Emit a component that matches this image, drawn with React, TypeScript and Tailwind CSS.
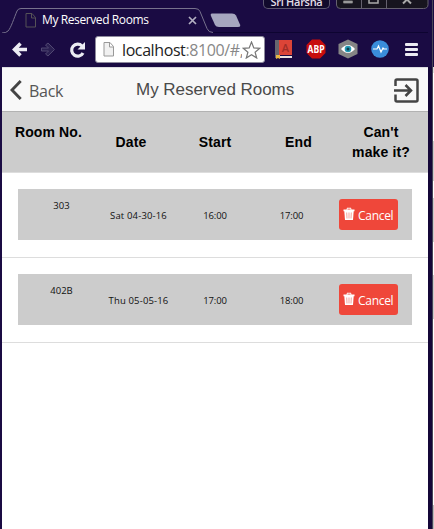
import React from 'react';

const ui = "font-['Open_Sans','Noto_Sans',sans-serif]";
const arial = "font-['Liberation_Sans',Arial,sans-serif]";

function PageIcon({ light = false }: { light?: boolean }) {
  return (
    <svg width="12" height="15" viewBox="0 0 12 15" className="shrink-0">
      <path
        d="M1 .5h6L10.5 4.500v9.500H1zM6.500 .5v4.500h4"
        fill={light ? '#f1f1f1' : 'none'}
        stroke={light ? '#999' : '#555257'}
      />
    </svg>
  );
}

function TabStrip() {
  return (
    <div className="relative flex h-[33px] shrink-0">
      <svg className="absolute inset-0" width="434" height="33" viewBox="0 0 434 33" fill="none">
        <path
          d="M2 35v-2q4 0 6-2c3-3 6-13 9-20q1-2.500 4-2.500h174q4 0 5 3l7 17q1.500 4 6 4"
          stroke="#77728d"
        />
        <path d="M213 32.500h215" stroke="#0d0431" />
        <path
          d="M212 13.500h20q3 0 4 2l4 9q1 2.500-2 2.500h-19q-3 0-4-2l-4-9q-1-2.500 1-2.500z"
          fill="#a6a6bf"
        />
        <path d="M432.500 0v33" stroke="#494657" />
      </svg>
      <div className="flex w-[200px] items-center pt-[7px] pl-[25px]">
        <PageIcon />
        <span className={`${ui} ml-[5px] w-[140px] text-[12px] leading-4 font-medium tracking-[-0.4px] whitespace-nowrap text-white`}>
          My Reserved Rooms
        </span>
        <svg className="ml-[6px] shrink-0" width="9" height="9" viewBox="0 0 9 9" stroke="#b3b0c2" strokeWidth="1.700">
          <path d="M1 1l7 7M8 1L1 8" />
        </svg>
      </div>
      <div className="relative ml-[63px] flex h-[9px] w-[67px] items-end justify-center overflow-hidden rounded-b-[5px] border-x border-b border-[#5d5870] bg-[#110a2c]">
        <span className={`${ui} -mb-px text-[11px] leading-[14px] font-semibold tracking-[-0.3px] whitespace-nowrap text-[#e1dfe7]`}>
          Sri Harsha
        </span>
      </div>
      <svg className="relative ml-[6px]" width="93" height="10" viewBox="0 0 93 10" fill="none">
        <path d="M.5 0v5q0 3.500 4 3.500h83q4.500 0 4.500-4V0" fill="#17151f" stroke="#65616f" />
        <path d="M25.500 0v8M50.500 0v8" stroke="#65616f" />
        <path d="M7.500 1h9v2h-9z" fill="#bcbcbf" stroke="#777" />
        <path d="M33 0v3h9V0" stroke="#aaa" strokeWidth="1.500" />
        <path d="M67 3.500l4-4 4 4" stroke="#aaa" strokeWidth="2" />
      </svg>
    </div>
  );
}

function Toolbar() {
  return (
    <div className="relative flex h-[34px] shrink-0 items-center pb-[2px]">
      <svg width="94" height="32" viewBox="0 0 94 32" fill="none" className="shrink-0">
        <path d="M27 16.500H14.500M20.500 10.500l-6 6 6 6" stroke="#ececf3" strokeWidth="3.500" />
        <path
          d="M41.500 15h7l-3-3 2.500-2 6.500 6.500-6.500 6.500-2.500-2 3-3h-7z"
          fill="#2b2052"
          stroke="#514872"
        />
        <path d="M83 20a6 6 0 1 1-1-7" stroke="#ececf3" strokeWidth="3.200" />
        <path d="M85 9v7.500h-7.500z" fill="#ececf3" />
      </svg>
      <div className="mt-[1px] ml-[1px] flex h-[27px] w-[170px] shrink-0 items-center overflow-hidden rounded-[3px] border border-[#8e8b9d] bg-white pl-[7px]">
        <PageIcon light />
        <span className={`${ui} ml-[7px] w-[120px] overflow-hidden text-[16px] leading-6 tracking-[-0.4px] whitespace-nowrap text-[#888]`}>
          <span className="text-[#222]">localhost</span>:8100/#,
        </span>
        <svg width="19" height="18" viewBox="0 0 19 18" className="shrink-0">
          <path
            d="M9.500 1l2.300 5.900 6 .4-4.700 3.900 1.600 5.800-5.200-3.300L4.300 17l1.600-5.800L1.200 7.300l6-.4z"
            fill="#fff"
            stroke="#777"
            strokeWidth="1.200"
          />
        </svg>
      </div>
      <svg className="mt-[2px] ml-[9px]" width="18" height="24" viewBox="0 0 18 24">
        <path d="M1 2h4v18H1z" fill="#68656e" />
        <path d="M5 2h13v15H5z" fill="#dc4437" />
        <path d="M5 18h13v2H3z" fill="#eee4df" />
        <path d="M2 17h4v4l-2-1-2 1z" fill="#e9b744" />
        <text x="11.500" y="14" textAnchor="middle" fontSize="11" fontWeight="600" fontFamily="Open Sans" fill="#9f2d27">
          A
        </text>
      </svg>
      <svg className="ml-[14px]" width="20" height="20" viewBox="0 0 20 20">
        <path d="M6 .5h8L19.500 6v8L14 19.500H6L.5 14V6z" fill="#c70d0d" />
        <text
          x="10"
          y="14"
          textAnchor="middle"
          textLength="17"
          lengthAdjust="spacingAndGlyphs"
          fontSize="11"
          fontWeight="700"
          fontFamily="Open Sans"
          fill="#fff"
        >
          ABP
        </text>
      </svg>
      <svg className="ml-[12px]" width="20" height="20" viewBox="0 0 20 20">
        <path d="M10 .5l9.500 4.500v10L10 19.500.5 15V5z" fill="#858585" />
        <path d="M3 10q7-8 14 0-7 8-14 0z" fill="#fff" />
        <circle cx="10" cy="10" r="3.300" fill="#249ab3" />
        <circle cx="10" cy="10" r="1.500" fill="#123f4e" />
      </svg>
      <svg className="ml-[13px]" width="18" height="20" viewBox="0 0 18 20">
        <circle cx="9" cy="10" r="8.800" fill="#3a8ddb" />
        <path d="M2 10h4l1.500-3 2.500 6 2-4 1 1h3" fill="none" stroke="#fff" strokeWidth="1.200" />
      </svg>
      <div className="mt-[1px] ml-[16px] flex w-[13px] flex-col gap-[2px]">
        <i className="h-[3px] rounded-[1px] bg-[#ecebf2]" />
        <i className="h-[3px] rounded-[1px] bg-[#ecebf2]" />
        <i className="h-[3px] rounded-[1px] bg-[#ecebf2]" />
      </div>
      <i className="mr-px ml-auto h-[36px] w-px bg-[#494657]" />
    </div>
  );
}

function PageHeader() {
  return (
    <header className="flex h-[45px] shrink-0 items-center border-t border-b border-t-[#dcdce1] border-b-[#b2b2b2] bg-[#f8f8f8]">
      <svg className="ml-[8px] shrink-0" width="12" height="20" viewBox="0 0 12 20">
        <path d="M10.700 1L2 10l8.700 9" fill="none" stroke="#444" strokeWidth="2.900" />
      </svg>
      <span className={`${ui} mt-[3px] ml-[7px] w-[60px] text-[16px] leading-5 tracking-[-0.3px] text-[#555]`}>Back</span>
      <h1 className={`${arial} ml-[47px] w-[180px] text-[17px] leading-5 tracking-[-0.03px] whitespace-nowrap text-[#4a4a4a]`}>
        My Reserved Rooms
      </h1>
      <svg className="mt-[1px] ml-[78px] shrink-0" width="25" height="25" viewBox="0 0 25 25" fill="none" stroke="#444" strokeWidth="2.500">
        <path d="M1.500 8V3q0-1.500 1.500-1.500h19q1.500 0 1.500 1.500v19q0 1.500-1.500 1.500H3q-1.500 0-1.500-1.500v-5.500" />
        <path d="M0 12.500h16.500M11.500 7l5.500 5.500-5.500 5.500" />
      </svg>
    </header>
  );
}

function TableHead() {
  return (
    <div className={`${arial} flex h-[61px] shrink-0 border-b border-[#ddd] bg-[#ccc] pt-[10px] pl-[5px] text-center text-[14px] leading-5 font-bold tracking-[0.12px] text-black`}>
      <div className="w-[83px] whitespace-nowrap">Room No.</div>
      <div className="w-[82px] pt-[10px]">Date</div>
      <div className="w-[86px] pt-[10px]">Start</div>
      <div className="w-[81px] pt-[10px]">End</div>
      <div className="w-[84px]">
        Can't
        <br />
        make it?
      </div>
    </div>
  );
}

function TrashIcon() {
  return (
    <svg width="12" height="14" viewBox="0 0 12 14" className="-mt-px shrink-0">
      <path d="M.5 2.500h3L4 .8h4l.5 1.700h3v1.700H.5z" fill="#fff" />
      <path d="M4.500 2.500h3v-.8h-3z" fill="#ef473a" />
      <path d="M1.300 4h9.400L10 13H2z" fill="#fff" />
      <path d="M3.700 5.500l.3 6M6 5.500v6M8.300 5.500l-.3 6" stroke="#f4968e" strokeWidth=".9" />
    </svg>
  );
}

interface Reservation {
  room: string;
  date: string;
  start: string;
  end: string;
}

const reservations: Reservation[] = [
  { room: '303', date: 'Sat 04-30-16', start: '16:00', end: '17:00' },
  { room: '402B', date: 'Thu 05-05-16', start: '17:00', end: '18:00' },
];

function ReservationRow({ room, date, start, end }: Reservation) {
  return (
    <div className="h-[85px] shrink-0 border-b border-[#ddd] px-4 pt-4">
      <div className={`${ui} flex h-[51px] bg-[#ccc] pt-[10px] pl-[5px] text-center text-[9.500px] leading-[14px] whitespace-nowrap text-[#111]`}>
        <div className="w-[77px]">{room}</div>
        <div className="w-[77px] pt-[10px] tracking-[0.15px]">{date}</div>
        <div className="w-[76px] pt-[10px] tracking-[-0.15px]">{start}</div>
        <div className="w-[77px] pt-[10px] tracking-[-0.15px]">{end}</div>
        <button className="ml-[9px] flex h-[31px] w-[59px] items-center rounded-[3px] bg-[#ef473a] pl-[4px] text-white">
          <TrashIcon />
          <span className="mt-[2px] ml-[3px] text-[12px] leading-4 font-medium tracking-[-0.3px]">Cancel</span>
        </button>
      </div>
    </div>
  );
}

export default function App() {
  return (
    <div className="flex h-[529px] w-[434px] flex-col overflow-hidden bg-[#1a0b43]">
      <TabStrip />
      <Toolbar />
      <div className="flex min-h-0 flex-1">
        <main className="ml-[2px] flex w-[426px] shrink-0 flex-col bg-white">
          <PageHeader />
          <TableHead />
          {reservations.map((r) => (
            <ReservationRow key={r.room} {...r} />
          ))}
        </main>
        <div className="w-[4px] bg-[#140638]" />
        <div className="w-px bg-[#494657]" />
        <div className="flex w-px flex-col bg-white">
          <i className="h-[6px] bg-[#ddd]" />
          <i className="mt-[68px] h-[40px] bg-[#ccc]" />
          <i className="mt-[17px] h-[44px] bg-[#ccc]" />
          <i className="mt-[33px] h-[44px] bg-[#ccc]" />
          <i className="mt-auto h-[24px] bg-[#bbb]" />
        </div>
      </div>
    </div>
  );
}
